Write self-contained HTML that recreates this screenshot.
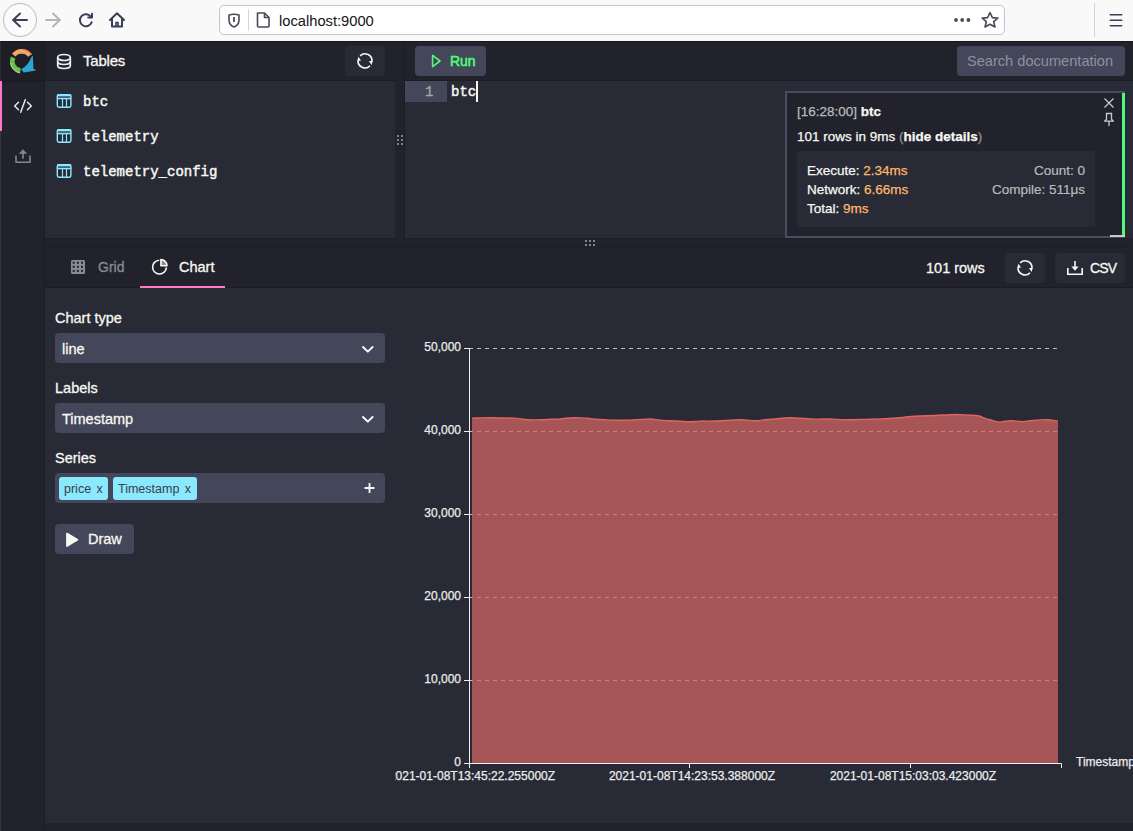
<!DOCTYPE html>
<html><head><meta charset="utf-8">
<style>
*{box-sizing:border-box;margin:0;padding:0}
html,body{width:1133px;height:831px;overflow:hidden;background:#21222c;font-family:"Liberation Sans",sans-serif;color:#f8f8f2}
.a{position:absolute}
svg{position:absolute;overflow:visible}
#chrome{left:0;top:0;width:1133px;height:41px;background:#f9f9fa}
#chromeline{left:0;top:41px;width:1133px;height:1px;background:#15151e;z-index:5}
#url{left:219px;top:5px;width:786px;height:30px;border:1px solid #c4c4c9;border-radius:5px;background:#fff}
.mono{font-family:"Liberation Mono",monospace}
.t{-webkit-text-stroke:0.3px currentColor}
</style></head><body>
<!-- browser chrome -->
<div id="chrome" class="a"></div>
<div id="chromeline" class="a"></div>
<div class="a" style="left:3px;top:3px;width:34px;height:34px;border:1px solid #b9b9c0;border-radius:50%;background:#fbfbfc"></div>
<svg style="left:0;top:0" width="140" height="40">
  <g fill="none" stroke="#3b3e56" stroke-width="2" stroke-linecap="round" stroke-linejoin="round">
    <path d="M13 20 H27 M20 13.5 L13.2 20 L20 26.5"/>
  </g>
  <g fill="none" stroke="#b3b3bb" stroke-width="2" stroke-linecap="round" stroke-linejoin="round">
    <path d="M46 20 H60 M53 13.5 L59.8 20 L53 26.5"/>
  </g>
  <g fill="none" stroke="#3b3e56" stroke-width="2" stroke-linecap="round" stroke-linejoin="round">
    <path d="M91.2 17.3 A6 6 0 1 0 91.6 22.3"/>
    <path d="M92 13.8 V17.6 H88.2"/>
    <path d="M110 20 L117 13.3 L124 20 M112 18.5 V26.5 H122 V18.5"/>
    <path d="M116 26 V22.5 H118 V26" stroke-width="1.6"/>
  </g>
</svg>
<div id="url" class="a"></div>
<svg style="left:0;top:0" width="1133" height="40">
  <g fill="none" stroke="#4a4b57" stroke-width="1.6" stroke-linejoin="round">
    <path d="M229 15 Q234 13.5 239 15 V20 Q239 25 234 27 Q229 25 229 20 Z"/>
    <path d="M234 17 V22" stroke-width="1.8"/>
  </g>
  <line x1="248.5" y1="9" x2="248.5" y2="31" stroke="#d6d6db" stroke-width="1"/>
  <g fill="none" stroke="#4a4b57" stroke-width="1.6" stroke-linejoin="round">
    <path d="M257.5 13 H264.5 L269 17.5 V26 Q269 27 268 27 H258.5 Q257.5 27 257.5 26 Z"/>
    <path d="M264.5 13 V17.5 H269"/>
  </g>
  <g fill="#4a4b57">
    <circle cx="956" cy="20" r="1.9"/><circle cx="962.2" cy="20" r="1.9"/><circle cx="968.4" cy="20" r="1.9"/>
  </g>
  <path d="M990 12.5 L992.4 17.6 L997.8 18.1 L993.7 21.7 L995 27 L990 24.2 L985 27 L986.3 21.7 L982.2 18.1 L987.6 17.6 Z" fill="none" stroke="#4a4b57" stroke-width="1.6" stroke-linejoin="round"/>
  <line x1="1094.5" y1="3" x2="1094.5" y2="37" stroke="#d3d3d8" stroke-width="1"/>
  <g stroke="#3b3e56" stroke-width="1.6" stroke-linecap="round">
    <path d="M1110.3 14.8 H1121.7 M1110.3 20.3 H1121.7 M1110.3 25.8 H1121.7"/>
  </g>
</svg>
<div class="a" style="left:279px;top:13px;font-size:14.7px;line-height:16px;color:#15141a">localhost:9000</div>

<!-- sidebar -->
<div class="a" style="left:0;top:41px;width:44px;height:790px;background:#21222c"></div>
<div class="a" style="left:44px;top:41px;width:1px;height:790px;background:#1b1c23"></div>
<div class="a" style="left:0;top:41px;width:44px;height:40px;background:#1d1e26"></div>
<div class="a" style="left:0;top:81px;width:44px;height:1px;background:#1a1b22"></div>
<div class="a" style="left:0;top:81px;width:2px;height:50px;background:#ff79c6"></div>
<div class="a" style="left:0;top:41px;width:1px;height:40px;background:#2b2c37"></div>
<div class="a" style="left:0;top:131px;width:1px;height:700px;background:#363743"></div>

<!-- logo -->
<svg style="left:0;top:41px" width="44" height="40">
  <path d="M13.8 14.1 A10 10 0 0 1 29.9 14.5" fill="none" stroke="#f6a95a" stroke-width="4.4"/>
  <path d="M22 8.3 A11.9 11.9 0 0 1 31.6 13.6" fill="none" stroke="#e8675f" stroke-width="1.3"/>
  <path d="M18.5 12.6 A7.8 7.8 0 0 1 24.5 12.6" fill="none" stroke="#9fb3c8" stroke-width="0.9"/>
  <path d="M13.1 16.5 A9.4 9.4 0 0 0 20.4 29.5" fill="none" stroke="#6cc04a" stroke-width="4.6"/>
  <path d="M10.5 22 A11.8 11.8 0 0 0 20 32" fill="none" stroke="#e0e0e6" stroke-width="0.9"/>
  <path d="M32.9 14.7 L33.4 27.8 L35.9 28.8 L34.9 29.8 L23.8 31.4 L21.2 28.3 Q28.3 24.5 31.3 16.2 Z" fill="#2ba6cf"/>
</svg>
<!-- nav icons -->
<svg style="left:0;top:81px" width="44" height="100">
  <g fill="none" stroke="#e8e8ee" stroke-width="1.5" stroke-linecap="round" stroke-linejoin="round">
    <path d="M18.5 21.2 L14.7 25 L18.5 28.8 M27.5 21.2 L31.3 25 L27.5 28.8 M25.3 18.8 L20.7 31.2"/>
  </g>
  <g fill="none" stroke="#85868e" stroke-width="1.6" stroke-linejoin="round">
    <path d="M16 74.5 V81.2 H30 V74.5"/>
    <path d="M23 77.8 V72"/>
  </g>
  <path d="M18.8 72.8 L23 68.3 L27.2 72.8 Z" fill="#85868e"/>
</svg>

<!-- tables panel -->
<div class="a" style="left:45px;top:41px;width:350px;height:39px;background:#21222c"></div>
<div class="a" style="left:45px;top:80px;width:350px;height:1px;background:#1c1d24"></div>
<div class="a" style="left:45px;top:81px;width:350px;height:157px;background:#282a36"></div>
<svg style="left:45px;top:41px" width="350" height="40">
  <g fill="none" stroke="#efeff3" stroke-width="1.7">
    <ellipse cx="19" cy="16.5" rx="6.3" ry="3"/>
    <path d="M12.7 16.5 V24.5 Q12.7 27.5 19 27.5 Q25.3 27.5 25.3 24.5 V16.5"/>
    <path d="M12.7 20.5 Q12.7 23.5 19 23.5 Q25.3 23.5 25.3 20.5"/>
  </g>
</svg>
<div class="a t" style="left:83px;top:52px;font-size:15px;line-height:17px;color:#f8f8f2;letter-spacing:-0.2px">Tables</div>
<div class="a" style="left:345px;top:46px;width:40px;height:30px;border-radius:4px;background:#282a36"></div>
<svg style="left:345px;top:46px" width="40" height="30">
  <g fill="none" stroke="#f8f8f2" stroke-width="1.6">
    <path d="M15.14 9.81 A7 7 0 0 1 26.97 15.46"/>
    <path d="M25.04 19.71 A7 7 0 0 1 13.03 14.24"/>
  </g>
  <path d="M23.9 15.05 L27.7 15.05 L26.6 18.9 Z" fill="#f8f8f2"/>
  <path d="M16.1 14.65 L12.3 14.65 L13.4 10.8 Z" fill="#f8f8f2"/>
</svg>
<svg style="left:45px;top:81px" width="350" height="157">
  <rect x="12.3" y="13.7" width="13.6" height="12.5" rx="1.6" fill="none" stroke="#8be9fd" stroke-width="1.4"/>
  <rect x="12" y="13.4" width="14.2" height="2" fill="#8be9fd"/>
  <rect x="12" y="16.7" width="14.2" height="1.6" fill="#8be9fd"/>
  <rect x="16.9" y="17" width="1.2" height="9" fill="#8be9fd"/><rect x="20.9" y="17" width="1.2" height="9" fill="#8be9fd"/>
  <rect x="12.3" y="48.7" width="13.6" height="12.5" rx="1.6" fill="none" stroke="#8be9fd" stroke-width="1.4"/>
  <rect x="12" y="48.4" width="14.2" height="2" fill="#8be9fd"/>
  <rect x="12" y="51.7" width="14.2" height="1.6" fill="#8be9fd"/>
  <rect x="16.9" y="52" width="1.2" height="9" fill="#8be9fd"/><rect x="20.9" y="52" width="1.2" height="9" fill="#8be9fd"/>
  <rect x="12.3" y="83.7" width="13.6" height="12.5" rx="1.6" fill="none" stroke="#8be9fd" stroke-width="1.4"/>
  <rect x="12" y="83.4" width="14.2" height="2" fill="#8be9fd"/>
  <rect x="12" y="86.7" width="14.2" height="1.6" fill="#8be9fd"/>
  <rect x="16.9" y="87" width="1.2" height="9" fill="#8be9fd"/><rect x="20.9" y="87" width="1.2" height="9" fill="#8be9fd"/>
</svg>
<div class="a mono" style="left:83px;top:93.5px;font-size:14px;line-height:16px;-webkit-text-stroke:0.45px currentColor;color:#f8f8f2">btc</div>
<div class="a mono" style="left:83px;top:128.5px;font-size:14px;line-height:16px;-webkit-text-stroke:0.45px currentColor;color:#f8f8f2">telemetry</div>
<div class="a mono" style="left:83px;top:163.5px;font-size:14px;line-height:16px;-webkit-text-stroke:0.45px currentColor;color:#f8f8f2">telemetry_config</div>

<!-- vertical splitter -->
<div class="a" style="left:395px;top:41px;width:10px;height:197px;background:#21222c"></div>
<div class="a" style="left:404px;top:41px;width:1px;height:197px;background:#1c1d24"></div>
<svg style="left:395px;top:130px" width="10" height="20">
  <g fill="#80818b"><rect x="2" y="5" width="2" height="2"/><rect x="6" y="5" width="2" height="2"/>
  <rect x="2" y="9" width="2" height="2"/><rect x="6" y="9" width="2" height="2"/>
  <rect x="2" y="13" width="2" height="2"/><rect x="6" y="13" width="2" height="2"/></g>
</svg>

<!-- editor -->
<div class="a" style="left:405px;top:41px;width:728px;height:39px;background:#21222c"></div>
<div class="a" style="left:405px;top:80px;width:728px;height:1px;background:#1c1d24"></div>
<div class="a" style="left:405px;top:81px;width:728px;height:157px;background:#282a36"></div>
<div class="a" style="left:415px;top:46px;width:71px;height:30px;border-radius:4px;background:#44475a"></div>
<svg style="left:415px;top:46px" width="71" height="30">
  <path d="M17.6 9.4 L25 15 L17.6 20.6 Z" fill="none" stroke="#50fa7b" stroke-width="1.6" stroke-linejoin="round"/>
</svg>
<div class="a" style="left:450px;top:53px;font-size:14px;line-height:16px;-webkit-text-stroke:0.55px currentColor;letter-spacing:-0.1px;color:#50fa7b">Run</div>
<div class="a" style="left:957px;top:46px;width:168px;height:30px;border-radius:4px;background:#44475a"></div>
<div class="a" style="left:967px;top:53px;font-size:14.6px;line-height:16px;color:#8f919f">Search documentation</div>

<div class="a" style="left:405px;top:81px;width:42px;height:21px;background:#44475a"></div>
<div class="a mono" style="left:425px;top:84px;font-size:14px;line-height:16px;color:#a4a5ab;-webkit-text-stroke:0.35px currentColor">1</div>
<div class="a mono" style="left:451px;top:84px;font-size:14px;line-height:16px;-webkit-text-stroke:0.45px currentColor;color:#f8f8f2">btc</div>
<div class="a" style="left:476px;top:81px;width:2px;height:21px;background:#f8f8f2"></div>

<!-- notification -->
<div class="a" style="left:785px;top:91px;width:340px;height:147px;background:#21222c;border:2px solid #4a4d62;border-right:none"></div>
<div class="a" style="left:1122px;top:93px;width:3px;height:144px;background:#50fa7b"></div>
<div class="a" style="left:1110px;top:235px;width:15px;height:2px;background:#c8c8d0"></div>
<div class="a" style="-webkit-text-stroke:0.25px currentColor;left:797px;top:104px;font-size:13.5px;line-height:16px;color:#bbbbbb">[16:28:00] <b style="color:#f8f8f2">btc</b></div>
<div class="a" style="-webkit-text-stroke:0.25px currentColor;left:797px;top:129px;font-size:13.5px;line-height:16px;color:#f8f8f2">101 rows in 9ms <span style="color:#8f919f">(</span><b>hide details</b><span style="color:#8f919f">)</span></div>
<div class="a" style="left:797px;top:151px;width:298px;height:76px;background:#282a36"></div>
<div class="a" style="-webkit-text-stroke:0.25px currentColor;left:807px;top:161px;font-size:13.5px;line-height:19px;color:#f8f8f2">Execute: <span style="color:#ffb86c">2.34ms</span><br>Network: <span style="color:#ffb86c">6.66ms</span><br>Total: <span style="color:#ffb86c">9ms</span></div>
<div class="a" style="-webkit-text-stroke:0.2px currentColor;left:885px;top:161px;width:200px;text-align:right;font-size:13.5px;line-height:19px;color:#bbbbbb">Count: 0<br>Compile: 511μs</div>
<svg style="left:1100px;top:92px" width="20" height="40">
  <g fill="none" stroke="#c8c8d0" stroke-width="1.3">
    <path d="M4.5 6.5 L13.5 15.5 M13.5 6.5 L4.5 15.5"/>
    <path d="M5.8 21.5 H12.2 M6.5 21.5 V27.3 L4.6 29.2 H13.4 L11.5 27.3 V21.5 M9 29.2 V34" stroke-linejoin="round"/>
  </g>
</svg>

<!-- horizontal splitter -->
<div class="a" style="left:45px;top:238px;width:1088px;height:9px;background:#21222c"></div>
<svg style="left:580px;top:238px" width="20" height="10">
  <g fill="#80818b"><rect x="5" y="2" width="2" height="2"/><rect x="9" y="2" width="2" height="2"/><rect x="13" y="2" width="2" height="2"/>
  <rect x="5" y="6" width="2" height="2"/><rect x="9" y="6" width="2" height="2"/><rect x="13" y="6" width="2" height="2"/></g>
</svg>

<div class="a" style="left:45px;top:238px;width:1088px;height:1px;background:repeating-linear-gradient(90deg,#1a1b22 0 1px,transparent 1px 2px)"></div>
<!-- results tab bar -->
<div class="a" style="left:45px;top:247px;width:1088px;height:41px;background:#21222c"></div>
<div class="a" style="left:45px;top:287px;width:1088px;height:1px;background:#1c1d24"></div>
<div class="a" style="left:45px;top:247px;width:1088px;height:1px;background:repeating-linear-gradient(90deg,#1a1b22 0 1px,transparent 1px 2px)"></div>
<svg style="left:45px;top:247px" width="200" height="41">
  <rect x="26" y="13" width="14" height="14" rx="1.5" fill="#888a96"/>
  <g fill="#21222c">
    <rect x="27.7" y="14.7" width="2" height="2"/><rect x="31.9" y="14.7" width="2" height="2"/><rect x="36" y="14.7" width="2" height="2"/>
    <rect x="27.7" y="18.8" width="2" height="2"/><rect x="31.9" y="18.8" width="2" height="2"/><rect x="36" y="18.8" width="2" height="2"/>
    <rect x="27.7" y="22.9" width="2" height="2"/><rect x="31.9" y="22.9" width="2" height="2"/><rect x="36" y="22.9" width="2" height="2"/>
  </g>
  <g fill="none" stroke="#f8f8f2" stroke-width="1.6">
    <path d="M114.2 13.2 A6.9 6.9 0 1 0 121.4 20.4"/>
    <path d="M115.9 18.7 V12.6 A6.1 6.1 0 0 1 122 18.7 Z" stroke-linejoin="round" fill="#8d8e96"/>
  </g>
  <rect x="95" y="39" width="85" height="2" fill="#ff79c6"/>
</svg>
<div class="a t" style="left:98px;top:259px;font-size:14px;line-height:16px;color:#888a96">Grid</div>
<div class="a t" style="left:179px;top:259px;font-size:14.5px;line-height:16px;color:#f8f8f2">Chart</div>
<div class="a t" style="left:926px;top:260px;font-size:14.5px;line-height:16px;color:#f8f8f2">101 rows</div>
<div class="a" style="left:1005px;top:253px;width:40px;height:30px;border-radius:4px;background:#282a36"></div>
<svg style="left:1005px;top:253px" width="40" height="30">
  <g fill="none" stroke="#f8f8f2" stroke-width="1.6">
    <path d="M15.14 9.81 A7 7 0 0 1 26.97 15.46"/>
    <path d="M25.04 19.71 A7 7 0 0 1 13.03 14.24"/>
  </g>
  <path d="M23.9 15.05 L27.7 15.05 L26.6 18.9 Z" fill="#f8f8f2"/>
  <path d="M16.1 14.65 L12.3 14.65 L13.4 10.8 Z" fill="#f8f8f2"/>
</svg>
<div class="a" style="left:1055px;top:253px;width:70px;height:30px;border-radius:4px;background:#282a36"></div>
<svg style="left:1055px;top:253px" width="70" height="30">
  <g fill="none" stroke="#f8f8f2" stroke-width="1.6">
    <path d="M12.8 15 V21.2 H27.2 V15"/>
    <path d="M20 8 V16"/>
  </g>
  <path d="M16.3 13.5 L20 17.8 L23.7 13.5 Z" fill="#f8f8f2"/>
</svg>
<div class="a t" style="left:1090px;top:260px;font-size:14px;line-height:16px;color:#f8f8f2;letter-spacing:-0.8px">CSV</div>

<!-- chart panel -->
<div class="a" style="left:45px;top:288px;width:1088px;height:535px;background:#282a36"></div>

<!-- chart config -->
<div class="a t" style="left:55px;top:310px;font-size:14.5px;line-height:17px;color:#f8f8f2">Chart type</div>
<div class="a" style="left:55px;top:333px;width:330px;height:30px;border-radius:4px;background:#44475a"></div>
<div class="a t" style="left:62px;top:341px;font-size:14.5px;line-height:17px;color:#f8f8f2">line</div>
<div class="a t" style="left:55px;top:380px;font-size:14.5px;line-height:17px;color:#f8f8f2">Labels</div>
<div class="a" style="left:55px;top:403px;width:330px;height:30px;border-radius:4px;background:#44475a"></div>
<div class="a t" style="left:62px;top:411px;font-size:14.5px;line-height:17px;color:#f8f8f2">Timestamp</div>
<svg style="left:355px;top:334px" width="30" height="100">
  <g fill="none" stroke="#f8f8f2" stroke-width="2" stroke-linecap="round" stroke-linejoin="round">
    <path d="M8 13 L12.8 17.6 L17.6 13"/>
    <path d="M8 83 L12.8 87.6 L17.6 83"/>
  </g>
</svg>
<div class="a t" style="left:55px;top:450px;font-size:14.5px;line-height:17px;color:#f8f8f2">Series</div>
<div class="a" style="left:55px;top:473px;width:330px;height:30px;border-radius:4px;background:#44475a"></div>
<div class="a" style="left:59px;top:477px;width:49px;height:23px;border-radius:3px;background:#8be9fd"></div>
<div class="a" style="left:113px;top:477px;width:84px;height:23px;border-radius:3px;background:#8be9fd"></div>
<div class="a" style="left:64px;top:482px;font-size:12.5px;line-height:15px;color:#3a3c4a">price<span style="margin-left:5.3px">x</span></div>
<div class="a" style="left:118px;top:482px;font-size:12.5px;line-height:15px;color:#3a3c4a">Timestamp<span style="margin-left:5.3px">x</span></div>
<svg style="left:360px;top:478px" width="20" height="20">
  <path d="M4.5 10 H14.5 M9.5 5 V15" stroke="#f8f8f2" stroke-width="1.8"/>
</svg>
<div class="a" style="left:55px;top:524px;width:79px;height:30px;border-radius:4px;background:#44475a"></div>
<svg style="left:55px;top:524px" width="79" height="30">
  <path d="M12 9.6 L22.4 15.8 L12 22 Z" fill="#f8f8f2" stroke="#f8f8f2" stroke-width="1.8" stroke-linejoin="round"/>
</svg>
<div class="a t" style="left:88px;top:531px;font-size:14.5px;line-height:17px;color:#f8f8f2">Draw</div>

<svg style="left:395px;top:288px;overflow:hidden" width="738" height="535">
 <g transform="translate(-395,-288)">
  <g stroke="#b9bac0" stroke-width="1" stroke-dasharray="4 4">
   <path d="M469 348.5 H1058 M469 431.5 H1058 M469 514.5 H1058 M469 597.5 H1058 M469 680.5 H1058"/>
  </g>
  <path d="M472 418.10 C474.8 418.02 484.3 417.62 489 417.60 C493.7 417.58 495.7 417.92 500 418.00 C504.3 418.08 511.5 417.93 515 418.10 C518.5 418.27 518.8 418.72 521 419.00 C523.2 419.28 524.5 419.67 528 419.80 C531.5 419.93 538.3 419.90 542 419.80 C545.7 419.70 547.3 419.30 550 419.20 C552.7 419.10 555.5 419.37 558 419.20 C560.5 419.03 562.2 418.45 565 418.20 C567.8 417.95 572.2 417.75 575 417.70 C577.8 417.65 579.8 417.80 582 417.90 C584.2 418.00 585.8 418.08 588 418.30 C590.2 418.52 592.2 418.95 595 419.20 C597.8 419.45 600.5 419.62 605 419.80 C609.5 419.98 616.8 420.30 622 420.30 C627.2 420.30 631.3 420.02 636 419.80 C640.7 419.58 646.0 418.95 650 419.00 C654.0 419.05 656.7 419.82 660 420.10 C663.3 420.38 666.7 420.52 670 420.70 C673.3 420.88 676.7 421.02 680 421.20 C683.3 421.38 686.7 421.82 690 421.80 C693.3 421.78 695.8 421.23 700 421.10 C704.2 420.97 708.3 421.22 715 421.00 C721.7 420.78 733.3 419.85 740 419.80 C746.7 419.75 750.8 420.70 755 420.70 C759.2 420.70 761.7 420.08 765 419.80 C768.3 419.52 770.8 419.35 775 419.00 C779.2 418.65 783.3 417.68 790 417.70 C796.7 417.72 808.3 418.88 815 419.10 C821.7 419.32 825.0 418.88 830 419.00 C835.0 419.12 839.2 419.73 845 419.80 C850.8 419.87 858.3 419.58 865 419.40 C871.7 419.22 879.2 418.98 885 418.70 C890.8 418.42 895.0 418.12 900 417.70 C905.0 417.28 909.2 416.57 915 416.20 C920.8 415.83 929.2 415.75 935 415.50 C940.8 415.25 945.8 414.85 950 414.70 C954.2 414.55 956.7 414.53 960 414.60 C963.3 414.67 967.0 414.90 970 415.10 C973.0 415.30 975.5 415.25 978 415.80 C980.5 416.35 983.0 417.73 985 418.40 C987.0 419.07 987.7 419.18 990 419.80 C992.3 420.42 996.5 421.87 999 422.10 C1001.5 422.33 1002.8 421.42 1005 421.20 C1007.2 420.98 1009.2 420.73 1012 420.80 C1014.8 420.87 1019.0 421.60 1022 421.60 C1025.0 421.60 1027.0 421.08 1030 420.80 C1033.0 420.52 1037.0 420.08 1040 419.90 C1043.0 419.72 1045.5 419.58 1048 419.70 C1050.5 419.82 1053.3 420.35 1055 420.60 C1056.7 420.85 1057.5 421.10 1058 421.20 L1058 763 L472 763 Z" fill="rgb(218,103,101)" fill-opacity="0.72"/>
  <path d="M472 418.10 C474.8 418.02 484.3 417.62 489 417.60 C493.7 417.58 495.7 417.92 500 418.00 C504.3 418.08 511.5 417.93 515 418.10 C518.5 418.27 518.8 418.72 521 419.00 C523.2 419.28 524.5 419.67 528 419.80 C531.5 419.93 538.3 419.90 542 419.80 C545.7 419.70 547.3 419.30 550 419.20 C552.7 419.10 555.5 419.37 558 419.20 C560.5 419.03 562.2 418.45 565 418.20 C567.8 417.95 572.2 417.75 575 417.70 C577.8 417.65 579.8 417.80 582 417.90 C584.2 418.00 585.8 418.08 588 418.30 C590.2 418.52 592.2 418.95 595 419.20 C597.8 419.45 600.5 419.62 605 419.80 C609.5 419.98 616.8 420.30 622 420.30 C627.2 420.30 631.3 420.02 636 419.80 C640.7 419.58 646.0 418.95 650 419.00 C654.0 419.05 656.7 419.82 660 420.10 C663.3 420.38 666.7 420.52 670 420.70 C673.3 420.88 676.7 421.02 680 421.20 C683.3 421.38 686.7 421.82 690 421.80 C693.3 421.78 695.8 421.23 700 421.10 C704.2 420.97 708.3 421.22 715 421.00 C721.7 420.78 733.3 419.85 740 419.80 C746.7 419.75 750.8 420.70 755 420.70 C759.2 420.70 761.7 420.08 765 419.80 C768.3 419.52 770.8 419.35 775 419.00 C779.2 418.65 783.3 417.68 790 417.70 C796.7 417.72 808.3 418.88 815 419.10 C821.7 419.32 825.0 418.88 830 419.00 C835.0 419.12 839.2 419.73 845 419.80 C850.8 419.87 858.3 419.58 865 419.40 C871.7 419.22 879.2 418.98 885 418.70 C890.8 418.42 895.0 418.12 900 417.70 C905.0 417.28 909.2 416.57 915 416.20 C920.8 415.83 929.2 415.75 935 415.50 C940.8 415.25 945.8 414.85 950 414.70 C954.2 414.55 956.7 414.53 960 414.60 C963.3 414.67 967.0 414.90 970 415.10 C973.0 415.30 975.5 415.25 978 415.80 C980.5 416.35 983.0 417.73 985 418.40 C987.0 419.07 987.7 419.18 990 419.80 C992.3 420.42 996.5 421.87 999 422.10 C1001.5 422.33 1002.8 421.42 1005 421.20 C1007.2 420.98 1009.2 420.73 1012 420.80 C1014.8 420.87 1019.0 421.60 1022 421.60 C1025.0 421.60 1027.0 421.08 1030 420.80 C1033.0 420.52 1037.0 420.08 1040 419.90 C1043.0 419.72 1045.5 419.58 1048 419.70 C1050.5 419.82 1053.3 420.35 1055 420.60 C1056.7 420.85 1057.5 421.10 1058 421.20" fill="none" stroke="#e0645f" stroke-width="1.4"/>
  <g stroke="#f0f0f0" stroke-width="1" fill="none">
   <path d="M469.5 348 V764 M464 763.5 H1061.5 V768"/>
   <path d="M464 348.5 H469.5 M464 431.5 H469.5 M464 514.5 H469.5 M464 597.5 H469.5 M464 680.5 H469.5"/>
   <path d="M469.5 763.5 V768 M689.5 763.5 V768 M910.5 763.5 V768"/>
  </g>
  <g fill="#ececec" stroke="#ececec" stroke-width="0.25" font-family="Liberation Sans" font-size="12" text-anchor="end">
   <text x="461" y="350.5">50,000</text>
   <text x="461" y="433.5">40,000</text>
   <text x="461" y="516.5">30,000</text>
   <text x="461" y="599.5">20,000</text>
   <text x="461" y="682.5">10,000</text>
   <text x="461" y="765.5">0</text>
  </g>
  <g fill="#ececec" stroke="#ececec" stroke-width="0.25" font-family="Liberation Sans" font-size="12" text-anchor="middle">
   <text x="472" y="780">2021-01-08T13:45:22.255000Z</text>
   <text x="692" y="780">2021-01-08T14:23:53.388000Z</text>
   <text x="913" y="780">2021-01-08T15:03:03.423000Z</text>
  </g>
  <text x="1076" y="766" fill="#ececec" stroke="#ececec" stroke-width="0.25" font-family="Liberation Sans" font-size="12">Timestamp</text>
 </g>
</svg>

</body></html>
